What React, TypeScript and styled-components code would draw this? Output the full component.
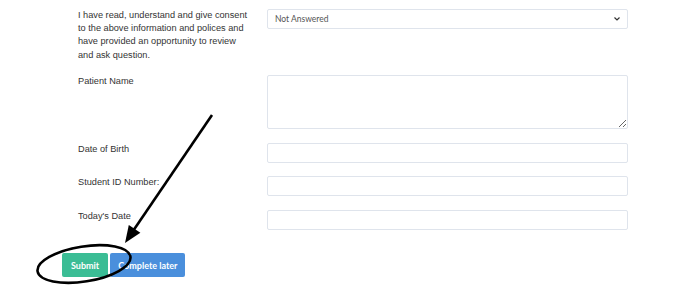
import React from "react";
import styled, { createGlobalStyle } from "styled-components";

const Global = createGlobalStyle`
  html, body { margin: 0; padding: 0; background: #fff; }
  body { font-family: "Liberation Sans", Arial, sans-serif; }
`;

const Page = styled.div`
  position: relative;
  width: 700px;
  height: 286px;
  overflow: hidden;
  background: #fff;
`;

const Form = styled.form`
  display: flex;
  flex-direction: column;
  gap: 13.5px;
  padding: 9px 0 0 78px;
`;

const Row = styled.div`
  display: flex;
  align-items: flex-start;
`;

const Label = styled.label`
  width: 189px;
  flex: none;
  font-size: 9.2px;
  line-height: 13.2px;
  color: #333;
  box-sizing: border-box;
`;

const Field = styled.div`
  width: 361px;
  flex: none;
  position: relative;
`;

const controlBase = `
  box-sizing: border-box;
  width: 100%;
  border: 1px solid #dfe4ec;
  border-radius: 2px;
  background: #fff;
  font-family: Lato, "Liberation Sans", sans-serif;
  outline: none;
`;

const Select = styled.div`
  ${controlBase}
  height: 20px;
  display: flex;
  align-items: center;
  justify-content: space-between;
  padding: 0 7px 0 7px;
  font-size: 8.5px;
  color: #555;
`;

const Chevron = styled.svg`
  width: 6px;
  height: 4px;
`;

const TextArea = styled.textarea`
  ${controlBase}
  display: block;
  height: 54px;
  resize: vertical;
`;

const Input = styled.input`
  ${controlBase}
  display: block;
  height: 20px;
`;

const Buttons = styled.div`
  display: flex;
  gap: 2px;
  margin-top: 10px;
  margin-left: -16px;
`;

const Button = styled.button<{ $color: string; $pad: number }>`
  height: 24px;
  padding: 0 ${(p) => p.$pad}px;
  border: none;
  border-radius: 2px;
  background: ${(p) => p.$color};
  color: #fff;
  font-family: Lato, "Liberation Sans", sans-serif;
  font-weight: 700;
  font-size: 9px;
`;

const Overlay = styled.svg`
  position: absolute;
  left: 0;
  top: 0;
  pointer-events: none;
`;

export default function App() {
  return (
    <Page>
      <Global />
      <Form onSubmit={(e) => e.preventDefault()}>
        <Row>
          <Label>
            I have read, understand and give consent
            <br />
            to the above information and polices and
            <br />
            have provided an opportunity to review
            <br />
            and ask question.
          </Label>
          <Field>
            <Select>
              <span>Not Answered</span>
              <Chevron viewBox="0 0 6 4">
                <path d="M0.5 0.5 L3 3 L5.5 0.5" fill="none" stroke="#333" strokeWidth="1.2" />
              </Chevron>
            </Select>
          </Field>
        </Row>
        <Row>
          <Label>Patient Name</Label>
          <Field>
            <TextArea />
          </Field>
        </Row>
        <Row>
          <Label>Date of Birth</Label>
          <Field>
            <Input />
          </Field>
        </Row>
        <Row>
          <Label>Student ID Number:</Label>
          <Field>
            <Input />
          </Field>
        </Row>
        <Row>
          <Label>Today's Date</Label>
          <Field>
            <Input />
          </Field>
        </Row>
        <Buttons>
          <Button type="button" $color="#3bbd95" $pad={9}>Submit</Button>
          <Button type="button" $color="#4a8fdc" $pad={8}>Complete later</Button>
        </Buttons>
      </Form>
      <Overlay width="700" height="286" viewBox="0 0 700 286">
        <line x1="212" y1="115" x2="133" y2="231" stroke="#000" strokeWidth="2.6" />
        <polygon points="125,243 140.4,232.8 128.8,225" fill="#000" />
        <ellipse cx="84" cy="264" rx="47" ry="17.5" transform="rotate(-9 84 264)" fill="none" stroke="#000" strokeWidth="2.6" />
      </Overlay>
    </Page>
  );
}
